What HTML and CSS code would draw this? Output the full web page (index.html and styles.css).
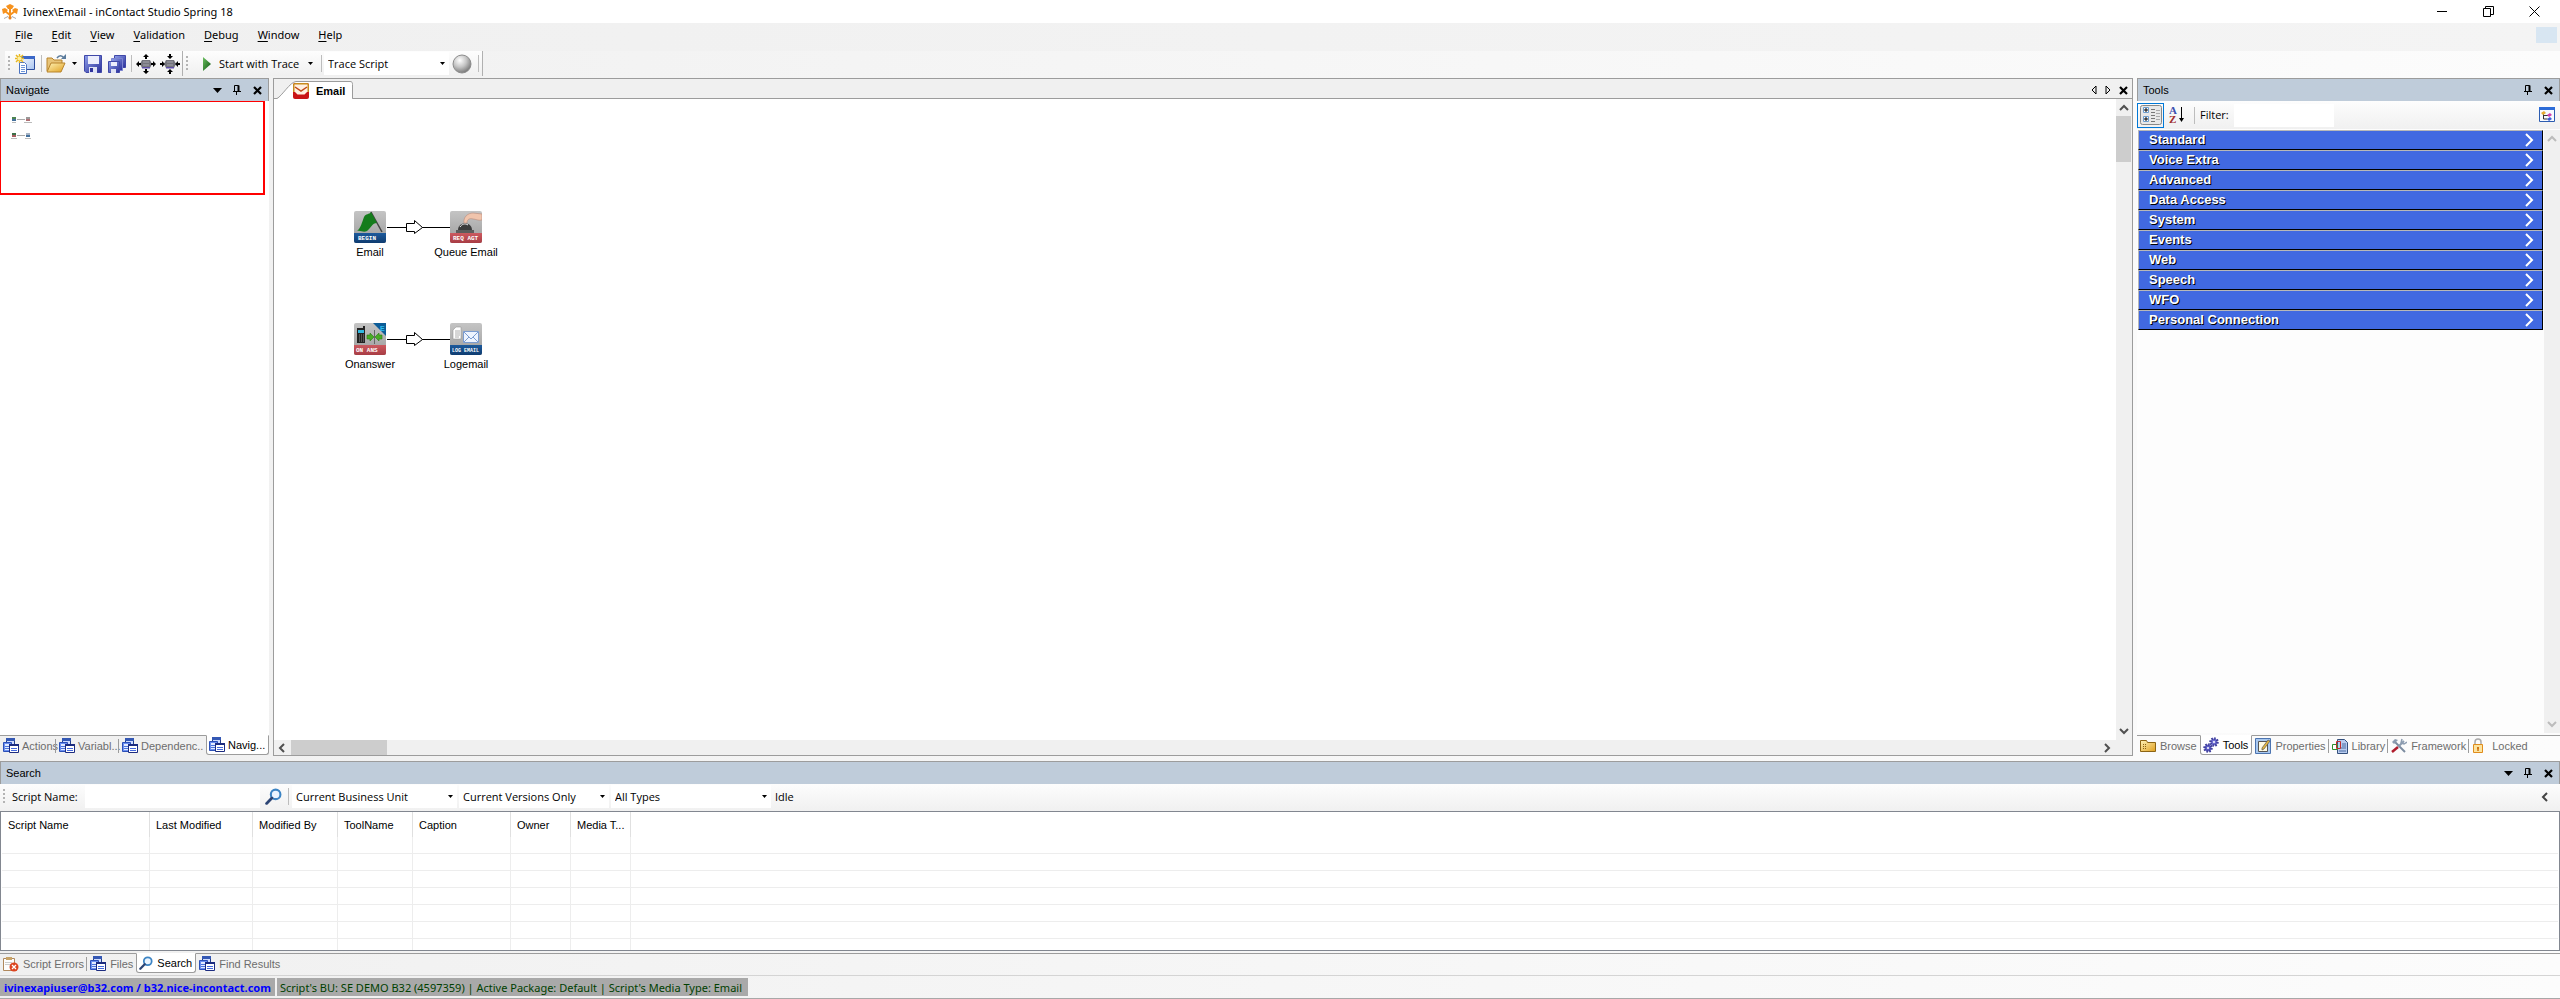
FILE: index.html
```html
<!DOCTYPE html>
<html lang="en">
<head>
  <meta charset="UTF-8">
  <meta name="viewport" content="width=device-width, initial-scale=1.0">
  <title>Ivinex\Email - inContact Studio Spring 18</title>
  <link rel="stylesheet" href="styles.css">
</head>
<body>
  <!-- shared icons -->
  <svg class="defs" width="0" height="0">
    <defs>
      <linearGradient id="gFolder" x1="0" y1="0" x2="1" y2="1"><stop offset="0" stop-color="#fff3b8"/><stop offset="1" stop-color="#e0a020"/></linearGradient>
      <linearGradient id="gBlue" x1="0" y1="0" x2="1" y2="1"><stop offset="0" stop-color="#8fa0ea"/><stop offset="1" stop-color="#2a2f9a"/></linearGradient>
      <linearGradient id="gPane" x1="0" y1="0" x2="1" y2="1"><stop offset="0" stop-color="#ffffff"/><stop offset="1" stop-color="#a8c4f0"/></linearGradient>
      <linearGradient id="gTile" x1="0" y1="0" x2="0" y2="1"><stop offset="0" stop-color="#c4c4c4"/><stop offset="1" stop-color="#9c9c9c"/></linearGradient>
      <linearGradient id="gNavy" x1="0" y1="0" x2="0" y2="1"><stop offset="0" stop-color="#1d5a9c"/><stop offset="1" stop-color="#0f3c70"/></linearGradient>
      <linearGradient id="gRed" x1="0" y1="0" x2="0" y2="1"><stop offset="0" stop-color="#cc5a60"/><stop offset="1" stop-color="#a83c44"/></linearGradient>
      <linearGradient id="gPlay" x1="0" y1="0" x2="1" y2="1"><stop offset="0" stop-color="#6cc060"/><stop offset="1" stop-color="#0c5410"/></linearGradient>
      <radialGradient id="gBall" cx="0.38" cy="0.3" r="0.75"><stop offset="0" stop-color="#ffffff"/><stop offset="0.5" stop-color="#c4c4c4"/><stop offset="1" stop-color="#707070"/></radialGradient>
    </defs>
    <symbol id="i-down" viewBox="0 0 5 3"><path d="M0 0h5L2.500 3z" fill="#000"/></symbol>
    <symbol id="i-menu" viewBox="0 0 9 5"><path d="M0 0h9L4.500 5z" fill="#000"/></symbol>
    <symbol id="i-pin" viewBox="0 0 8 10"><path d="M1.500 6V.5h4V6M5 .5v5.500M6 .5V6M0 6.500h8M3.500 7v3" fill="none" stroke="#000"/></symbol>
    <symbol id="i-x" viewBox="0 0 9 9"><path d="M1 1l7 7M8 1L1 8" stroke="#000" stroke-width="2.200"/></symbol>
    <symbol id="i-chev" viewBox="0 0 9 14"><path d="M1 1l6 6-6 6" fill="none" stroke="#fff" stroke-width="2"/></symbol>
    <symbol id="i-script" viewBox="0 0 16 16">
      <path d="M3.500 .5h8v8h-8z" fill="#cfdcff" stroke="#24408c"/><path d="M3 0h9v3H3z" fill="#3458b4"/>
      <path d="M.5 4.500h8v9h-8z" fill="#6c90f0" stroke="#2c50b8"/><path d="M2 6h5v6H2z" fill="#e4ecff"/><path d="M2 8.500h5M2 10.500h5" stroke="#4c74dc"/>
      <path d="M6.500 6.500h9v8h-9z" fill="#fff" stroke="#1c2c80"/><path d="M6 6h10v2H6z" fill="#1c2c80"/><path d="M8 10.500h6M8 12.500h6" stroke="#4468dc"/>
    </symbol>
    <symbol id="i-find" viewBox="0 0 16 16">
      <circle cx="10" cy="6" r="4.500" fill="#eaf4ff" stroke="#3c84c4" stroke-width="2"/><path d="M6.500 9.500L1.500 14.500" stroke="#2c4474" stroke-width="2.600" stroke-linecap="round"/>
    </symbol>
    <symbol id="i-arrow" viewBox="0 0 63 14">
      <path d="M0 7h20v1H0zM35 7h28v1H35z" fill="#000" shape-rendering="crispEdges"/><path d="M19.500 3.500h8v-3l8 7-8 6v-2h-8z" fill="#fff" stroke="#000"/>
    </symbol>
  </svg>

  <header class="titlebar">
    <svg class="app-icon" width="16" height="16" viewBox="0 0 16 16">
      <path d="M2 14.500l4-2 2 2 2-2 4 2" fill="none" stroke="#aaa"/>
      <path d="M8 15V4M8 11L3 7M8 11l5-4" stroke="#f6921e" stroke-width="2" fill="none"/>
      <path d="M8 0l4 2-2 3H6L4 2z" fill="#f6921e"/><path d="M0 5l3-1 3 2-3 3-2 1zM16 5l-3-1-3 2 3 3 2 1z" fill="#f6921e"/><circle cx="8" cy="14" r="1.500" fill="#e8801c"/>
    </svg>
    <h1 class="title">Ivinex\Email - inContact Studio Spring 18</h1>
    <div class="window-buttons">
      <button aria-label="Minimize"><svg width="11" height="11"><path d="M0 5.500h10" stroke="#000"/></svg></button>
      <button aria-label="Restore"><svg width="11" height="11"><path d="M.5 2.500h7v8h-7zM2.500 2V.5h8v8H8" fill="none" stroke="#000"/></svg></button>
      <button aria-label="Close"><svg width="11" height="11"><path d="M.5 .5l10 10M10.500 .5l-10 10" stroke="#000"/></svg></button>
    </div>
  </header>

  <nav class="menubar">
    <button><u>F</u>ile</button>
    <button><u>E</u>dit</button>
    <button><u>V</u>iew</button>
    <button><u>V</u>alidation</button>
    <button><u>D</u>ebug</button>
    <button><u>W</u>indow</button>
    <button><u>H</u>elp</button>
    <span class="mdi-box"></span>
  </nav>

  <div class="toolbars">
    <div class="strip">
      <span class="grip"></span>
      <button class="tool" aria-label="New script"><svg width="20" height="20" viewBox="0 0 20 20">
        <path d="M4.500 2.500h15v13h-15z" fill="url(#gPane)" stroke="#2c4c9c"/><path d="M4 2h16v3H4z" fill="#3c68c8"/>
        <path d="M4.500 8.500h5l2 2v9h-7z" fill="#fff" stroke="#4c74c0"/><path d="M6 11.500h4M6 13.500h4M6 15.500h4M6 17.500h4" stroke="#6c94d8"/>
        <path d="M4.500 0v9M0 4.500h9M1 1l7 7M8 1L1 8" stroke="#e8b820" stroke-width="1.500"/><circle cx="4.500" cy="4.500" r="2" fill="#fff09c"/></svg></button>
      <span class="sep"></span>
      <button class="tool" aria-label="Open"><svg width="20" height="20" viewBox="0 0 20 20">
        <path d="M1 17V4h5l2 2h8v4" fill="#e8c478" stroke="#b8842c"/><path d="M1 18l4-9h14l-4 9z" fill="url(#gFolder)" stroke="#b8842c"/>
        <path d="M11 4c2-3 5-3 7 0" fill="none" stroke="#5c7c9c" stroke-width="1.500"/><path d="M15 5h5V0z" fill="#5c7c9c"/></svg></button>
      <button class="drop" aria-label="Open recent"><svg width="5" height="3"><use href="#i-down"/></svg></button>
      <button class="tool" aria-label="Save"><svg width="18" height="18" viewBox="0 0 18 18">
        <path d="M.5 .5h17v17H2l-1.500-1.500z" fill="url(#gBlue)" stroke="#4048a8"/><path d="M4 1h11v8H4z" fill="#eceefc"/><path d="M5 12h8v6H5z" fill="#dfe2f4"/><path d="M6 13h3v4H6z" fill="#30349c"/></svg></button>
      <button class="tool" aria-label="Save all"><svg width="18" height="18" viewBox="0 0 18 18">
        <path d="M6.500 .5h11v12h-11z" fill="url(#gBlue)" stroke="#4048a8"/><path d="M3.500 3.500h11v12h-11z" fill="url(#gBlue)" stroke="#7c84d0"/>
        <path d="M.5 6.500h11v11h-11z" fill="url(#gBlue)" stroke="#4048a8"/><path d="M3 7h6v4H3z" fill="#eceefc"/><path d="M3 14h5v4H3z" fill="#dfe2f4"/></svg></button>
      <span class="sep"></span>
      <button class="tool" aria-label="Expand"><svg width="20" height="20" viewBox="0 0 20 20">
        <path d="M6 6h8l2 4-2 4H6l-2-4z" fill="#74747c"/><path d="M6 13h8v1.500H6z" fill="#6050a8"/><path d="M10 0l3 3h-2v2H9V3H7zM10 20l3-3h-2v-2H9v2H7zM0 10l3-3v2h2v2H3v2zM20 10l-3-3v2h-2v2h2v2z" fill="#000"/><path d="M7 8h6M7 11h6" stroke="#a4a4ac"/></svg></button>
      <button class="tool" aria-label="Contract"><svg width="20" height="20" viewBox="0 0 20 20">
        <path d="M6 6h8l2 4-2 4H6l-2-4z" fill="#74747c"/><path d="M6 13h8v1.500H6z" fill="#6050a8"/><path d="M10 5l3-3h-2V0H9v2H7zM10 15l3 3h-2v2H9v-2H7zM5 10L2 7v2H0v2h2v2zM15 10l3-3v2h2v2h-2v2z" fill="#000"/><path d="M7 8h6M7 11h6" stroke="#a4a4ac"/></svg></button>
    </div>
    <div class="strip">
      <span class="grip"></span>
      <button class="start"><svg width="8" height="14" viewBox="0 0 8 14"><path d="M0 0l8 7-8 7z" fill="url(#gPlay)"/></svg>Start with Trace</button>
      <button class="drop" aria-label="Start options"><svg width="5" height="3"><use href="#i-down"/></svg></button>
      <span class="sep"></span>
      <div class="combo combo-trace">
        <select aria-label="Trace mode"><option>Trace Script</option></select>
        <svg width="5" height="3"><use href="#i-down"/></svg>
      </div>
      <button class="tool" aria-label="Trace state"><svg width="20" height="20"><circle cx="10" cy="10" r="9" fill="url(#gBall)" stroke="#8c8c8c"/></svg></button>
      <span class="sep"></span>
    </div>
  </div>

  <main class="dock">
    <section class="panel">
      <div class="panel-head">
        <h2>Navigate</h2>
        <button aria-label="Menu"><svg width="9" height="5"><use href="#i-menu"/></svg></button>
        <button aria-label="Pin"><svg width="8" height="10"><use href="#i-pin"/></svg></button>
        <button aria-label="Close"><svg width="9" height="9"><use href="#i-x"/></svg></button>
      </div>
      <div class="panel-body">
        <div class="overview">
          <svg width="24" height="26" viewBox="0 0 24 26">
            <path d="M6 3.500h8M6 19.500h8" stroke="#aaa"/>
            <path d="M1 1h4v2H1z" fill="#4c8450"/><path d="M1 3h4v2H1z" fill="#44709c"/><path d="M15 1h4v2h-4z" fill="#999"/><path d="M15 3h4v2h-4z" fill="#b07074"/>
            <path d="M1 17h4v2H1z" fill="#3c7048"/><path d="M1 19h4v2H1z" fill="#a85c60"/><path d="M15 17h4v2h-4z" fill="#a8b4c4"/><path d="M15 19h4v2h-4z" fill="#44709c"/>
            <path d="M1 6.500h4M13 6.500h8M0 22.500h6M14 22.500h6" stroke="#bbb"/>
          </svg>
        </div>
      </div>
      <div class="tabs nav-tabs">
        <button class="tab"><svg width="16" height="16"><use href="#i-script"/></svg><span>Actions</span></button>
        <button class="tab"><svg width="16" height="16"><use href="#i-script"/></svg><span>Variabl...</span></button>
        <button class="tab"><svg width="16" height="16"><use href="#i-script"/></svg><span>Dependenc..</span></button>
        <button class="tab active"><svg width="16" height="16"><use href="#i-script"/></svg><span>Navig...</span></button>
      </div>
    </section>

    <section class="editor">
      <div class="doc-tabs">
        <button class="doc-tab">
          <svg class="doc-shape" width="80" height="20"><path d="M0 19.500h3C8 17 16 3 22 2.500h54c2 0 2.500 1 2.500 3v14.500H0z" fill="#fff"/><path d="M0 19.500h3C8 17 16 3 22 2.500h54c2 0 2.500 1 2.500 3v14h1.500" fill="none" stroke="#9c9c9c"/></svg>
          <svg width="16" height="16" viewBox="0 0 16 16"><rect width="16" height="16" rx="2" fill="#c81414"/><path d="M0 2q0-2 2-2h12q2 0 2 2v7H0z" fill="#c88c1c"/><path d="M1.500 1.500h13v7l-3 3h-7l-3-3z" fill="#fff0e0"/><path d="M2 4l6 4 6-4" fill="none" stroke="#c04818" stroke-width="1.500"/></svg>
          <span>Email</span>
        </button>
        <div class="doc-actions">
          <button aria-label="Previous"><svg width="6" height="10"><path d="M5 1v8L1 5z" fill="none" stroke="#000"/></svg></button>
          <button aria-label="Next"><svg width="6" height="10"><path d="M1 1v8l4-4z" fill="none" stroke="#000"/></svg></button>
          <button aria-label="Close"><svg width="9" height="9"><use href="#i-x"/></svg></button>
        </div>
      </div>
      <div class="canvas-wrap">
        <div class="canvas">
          <figure class="node begin">
            <svg width="32" height="32" viewBox="0 0 32 32"><rect width="32" height="32" rx="2" fill="url(#gTile)"/>
              <path d="M17 1l11 20" stroke="#444" stroke-width="1.500"/><path d="M17 1c-2 3-5 1-7 5-2 5-3 11-7 14 4-1 6 2 10 0 4-3 5-8 10-8z" fill="#157c1c"/><path d="M0 22h32v8q0 2-2 2H2q-2 0-2-2z" fill="url(#gNavy)"/><text class="tile-text" x="4" y="29">BEGIN</text></svg>
            <figcaption>Email</figcaption>
          </figure>
          <svg class="link link-a" width="63" height="14"><use href="#i-arrow"/></svg>
          <figure class="node queue">
            <svg width="32" height="32" viewBox="0 0 32 32"><rect width="32" height="32" rx="2" fill="url(#gTile)"/>
              <path d="M8 19c0-9 14-9 14 0z" fill="#3c3c3c"/><path d="M10 16c2-3 5-4 8-2" stroke="#eee" fill="none"/><path d="M6 19h18v3H6z" fill="#5c5c5c"/><path d="M14 12c-1-6 4-10 9-10l9 1v6c-4 1-6-1-9-1-3-1-6 0-6 4z" fill="#f0c4ac" stroke="#b88c7c" stroke-width=".6"/><path d="M0 22h32v8q0 2-2 2H2q-2 0-2-2z" fill="url(#gRed)"/><text class="tile-text" x="3" y="29">REQ AGT</text></svg>
            <figcaption>Queue Email</figcaption>
          </figure>
          <figure class="node answer">
            <svg width="32" height="32" viewBox="0 0 32 32"><rect width="32" height="32" rx="2" fill="url(#gTile)"/>
              <path d="M19 0h13v13z" fill="#0c5c98"/><text class="tile-mark" x="26" y="8">E</text>
              <path d="M9 3h2v3H9zM3 5h8v15H3z" fill="#222"/><path d="M4 7h6v3H4z" fill="#30b8e0"/><path d="M5 12h5M5 14h5M5 16h5M5 18h5" stroke="#888" stroke-dasharray="1 1"/>
              <path d="M20.500 7v14" stroke="#666"/><path d="M13 12h3v-2l4 4-4 4v-2h-3zM28 12h-3v-2l-4 4 4 4v-2h3z" fill="#48ac24" stroke="#2c7c14" stroke-width=".6"/>
              <path d="M0 22h32v8q0 2-2 2H2q-2 0-2-2z" fill="url(#gRed)"/><text class="tile-text" x="2" y="29">ON ANS</text></svg>
            <figcaption>Onanswer</figcaption>
          </figure>
          <svg class="link link-b" width="63" height="14"><use href="#i-arrow"/></svg>
          <figure class="node log">
            <svg width="32" height="32" viewBox="0 0 32 32"><rect width="32" height="32" rx="2" fill="url(#gTile)"/>
              <path d="M6 4h5v12H3V7z" fill="#fff" stroke="#999" stroke-width=".6"/><path d="M5 8h5M5 10h5M5 12h5M5 14h4" stroke="#999" stroke-width=".8"/>
              <path d="M13.500 8.500h15v11h-15z" fill="#eef4ff" stroke="#7c9cd0"/><path d="M14 9l7 7 7-7M14 19l5-5M28 19l-5-5" fill="none" stroke="#7c9cd0"/>
              <path d="M0 22h32v8q0 2-2 2H2q-2 0-2-2z" fill="url(#gNavy)"/><text class="tile-text small" x="2" y="29">LOG EMAIL</text></svg>
            <figcaption>Logemail</figcaption>
          </figure>
        </div>
        <div class="vscroll">
          <svg width="15" height="17"><path d="M4 11l4-4 4 4" fill="none" stroke="#505050" stroke-width="2"/></svg>
          <span class="thumb"></span>
          <svg class="scroll-end" width="15" height="17"><path d="M4 6l4 4 4-4" fill="none" stroke="#505050" stroke-width="2"/></svg>
        </div>
        <div class="hscroll">
          <svg width="17" height="15"><path d="M10 4L6 8l4 4" fill="none" stroke="#505050" stroke-width="2"/></svg>
          <span class="thumb"></span>
          <svg class="scroll-end" width="17" height="15"><path d="M7 4l4 4-4 4" fill="none" stroke="#505050" stroke-width="2"/></svg>
        </div>
      </div>
    </section>

    <section class="panel">
      <div class="panel-head">
        <h2>Tools</h2>
        <button aria-label="Pin"><svg width="8" height="10"><use href="#i-pin"/></svg></button>
        <button aria-label="Close"><svg width="9" height="9"><use href="#i-x"/></svg></button>
      </div>
      <div class="filter-bar">
        <button class="grouped" aria-label="Group by category"><svg width="22" height="20" viewBox="0 0 22 20">
          <rect x=".5" y=".5" width="21" height="19" rx="2" fill="#e8e8e8" stroke="#888"/>
          <path d="M3.500 2.500h5v5h-5zM3.500 11.500h5v5h-5z" fill="#fff" stroke="#6c9ccc"/><path d="M4 5h4M6 3v4M4 14h4M6 12v4" stroke="#000"/><path d="M11 4.500h4M11 7.500h4M11 10.500h4M11 13.500h4M11 16.500h4" stroke="#777"/><path d="M16 5.500h4M16 8.500h4M16 11.500h4M16 14.500h4" stroke="#aaa"/></svg></button>
        <button class="sort" aria-label="Sort"><svg width="16" height="18" viewBox="0 0 16 18">
          <text class="az-a" x="0" y="8">A</text><text class="az-z" x="0" y="17">Z</text><path d="M12.500 1v13" stroke="#000"/><path d="M10 12h5l-2.500 4z" fill="#000"/></svg></button>
        <span class="sep"></span>
        <label for="filter">Filter:</label>
        <input id="filter" type="text">
        <button class="tree" aria-label="Tree view"><svg width="16" height="16" viewBox="0 0 16 16">
          <path d="M.5 .5h15v14H.5z" fill="#f8fbff" stroke="#2c5cb0"/><path d="M0 0h16v3H0z" fill="#2c6cd8"/><path d="M4.500 7v5h4M5 8.500h4" fill="none" stroke="#333"/><path d="M2 6l3-2 2 2-3 2z" fill="#e8ac30"/><path d="M8 8l3-2 2 2-3 2z" fill="#d040b0"/><path d="M8 12l3-2 2 2-3 2z" fill="#3c60d8"/></svg></button>
      </div>
      <div class="tool-area">
        <div class="groups">
          <button class="group">Standard<svg width="9" height="14"><use href="#i-chev"/></svg></button>
          <button class="group">Voice Extra<svg width="9" height="14"><use href="#i-chev"/></svg></button>
          <button class="group">Advanced<svg width="9" height="14"><use href="#i-chev"/></svg></button>
          <button class="group">Data Access<svg width="9" height="14"><use href="#i-chev"/></svg></button>
          <button class="group">System<svg width="9" height="14"><use href="#i-chev"/></svg></button>
          <button class="group">Events<svg width="9" height="14"><use href="#i-chev"/></svg></button>
          <button class="group">Web<svg width="9" height="14"><use href="#i-chev"/></svg></button>
          <button class="group">Speech<svg width="9" height="14"><use href="#i-chev"/></svg></button>
          <button class="group">WFO<svg width="9" height="14"><use href="#i-chev"/></svg></button>
          <button class="group">Personal Connection<svg width="9" height="14"><use href="#i-chev"/></svg></button>
        </div>
        <div class="vscroll disabled">
          <svg width="15" height="17"><path d="M4 11l4-4 4 4" fill="none" stroke="#bcbcbc" stroke-width="2"/></svg>
          <svg class="scroll-end" width="15" height="17"><path d="M4 6l4 4 4-4" fill="none" stroke="#bcbcbc" stroke-width="2"/></svg>
        </div>
      </div>
      <div class="tabs tool-tabs">
        <button class="tab"><svg width="16" height="16" viewBox="0 0 16 16"><path d="M.5 13.500v-11h6l1 2h8v9z" fill="url(#gFolder)" stroke="#8c6414"/><path d="M3 6.500h3M3 8.500h3M3 10.500h3" stroke="#8c6414" stroke-dasharray="1 1"/></svg><span>Browse</span></button>
        <button class="tab active"><svg width="16" height="16" viewBox="0 0 16 16"><circle cx="5" cy="11" r="3.500" fill="#5c5cc4" stroke="#40409c" stroke-width="2.500" stroke-dasharray="1.500 1.200"/><circle cx="11" cy="5" r="3.500" fill="#6c6cd0" stroke="#40409c" stroke-width="2.500" stroke-dasharray="1.500 1.200"/><circle cx="5" cy="11" r="1" fill="#fff"/><circle cx="11" cy="5" r="1" fill="#fff"/></svg><span>Tools</span></button>
        <button class="tab"><svg width="16" height="16" viewBox="0 0 16 16"><path d="M.5 .5h15v15H.5z" fill="#a8c8f0" stroke="#4c74b0"/><path d="M3.500 3.500h9v10h-9z" fill="#fffbe4" stroke="#555"/><path d="M7 10l6-8 2 1-6 8-2 1z" fill="#e8b83c" stroke="#555" stroke-width=".7"/></svg><span>Properties</span></button>
        <button class="tab"><svg width="16" height="16" viewBox="0 0 16 16"><path d="M5.500 1.500h7l3 3v11h-10z" fill="#b8ccf0" stroke="#34507c"/><path d="M10 6h4M10 8h4M8 10h6M7 13h7" stroke="#4c6ca0"/><path d="M.5 6.500h5v5h-5z" fill="#fff" stroke="#2c8c2c"/><path d="M4.500 3.500h4v7h-4z" fill="none" stroke="#c02c2c"/></svg><span>Library</span></button>
        <button class="tab"><svg width="16" height="16" viewBox="0 0 16 16"><path d="M3 3l11 11" stroke="#7c8ca0" stroke-width="2"/><path d="M1 4l3-3 3 1-4 4z" fill="#8c9cb0"/><path d="M13 3L8 8" stroke="#8c9cb0" stroke-width="2"/><path d="M11 1l-1 4 3 1 3-2" fill="none" stroke="#8c9cb0" stroke-width="1.500"/><path d="M7 9l-6 5" stroke="#b01c2c" stroke-width="2.500"/></svg><span>Framework</span></button>
        <button class="tab"><svg width="16" height="16" viewBox="0 0 16 16"><path d="M3 7V4c0-4 6-4 6 0v3" fill="none" stroke="#aaa" stroke-width="1.500"/><path d="M1.500 6.500h9v8h-9z" fill="#fce4a0" stroke="#e08c1c"/><path d="M6 9v4M5 10h2" stroke="#d0700c" stroke-width="1.500"/></svg><span>Locked</span></button>
      </div>
    </section>
  </main>

  <section class="panel search">
    <div class="panel-head">
      <h2>Search</h2>
      <button aria-label="Menu"><svg width="9" height="5"><use href="#i-menu"/></svg></button>
      <button aria-label="Pin"><svg width="8" height="10"><use href="#i-pin"/></svg></button>
      <button aria-label="Close"><svg width="9" height="9"><use href="#i-x"/></svg></button>
    </div>
    <div class="search-bar">
      <span class="grip"></span>
      <label for="scriptName">Script Name:</label>
      <input id="scriptName" type="text">
      <button class="go" aria-label="Search"><svg width="17" height="17"><use href="#i-find"/></svg></button>
      <span class="sep"></span>
      <div class="combo combo-unit">
        <select aria-label="Business unit"><option>Current Business Unit</option></select>
        <svg width="5" height="3"><use href="#i-down"/></svg>
      </div>
      <div class="combo combo-version">
        <select aria-label="Versions"><option>Current Versions Only</option></select>
        <svg width="5" height="3"><use href="#i-down"/></svg>
      </div>
      <div class="combo combo-type">
        <select aria-label="Types"><option>All Types</option></select>
        <svg width="5" height="3"><use href="#i-down"/></svg>
      </div>
      <span class="state">Idle</span>
      <button class="collapse" aria-label="Collapse"><svg width="7" height="10"><path d="M6 1L2 5l4 4" fill="none" stroke="#444" stroke-width="2"/></svg></button>
    </div>
    <div class="results">
      <table>
        <colgroup><col class="c-script"><col class="c-date"><col class="c-by"><col class="c-tool"><col class="c-caption"><col class="c-owner"><col class="c-owner"><col></colgroup>
        <thead>
          <tr><th>Script Name</th><th>Last Modified</th><th>Modified By</th><th>ToolName</th><th>Caption</th><th>Owner</th><th>Media T...</th><th></th></tr>
        </thead>
        <tbody>
          <tr><td></td><td></td><td></td><td></td><td></td><td></td><td></td><td></td></tr>
          <tr><td></td><td></td><td></td><td></td><td></td><td></td><td></td><td></td></tr>
          <tr><td></td><td></td><td></td><td></td><td></td><td></td><td></td><td></td></tr>
          <tr><td></td><td></td><td></td><td></td><td></td><td></td><td></td><td></td></tr>
          <tr><td></td><td></td><td></td><td></td><td></td><td></td><td></td><td></td></tr>
          <tr><td></td><td></td><td></td><td></td><td></td><td></td><td></td><td></td></tr>
          <tr><td></td><td></td><td></td><td></td><td></td><td></td><td></td><td></td></tr>
        </tbody>
      </table>
    </div>
    <div class="tabs search-tabs">
      <button class="tab"><svg width="16" height="16" viewBox="0 0 16 16"><path d="M.5 2.500h11v12H.5z" fill="#fdfdfd" stroke="#b0885c"/><path d="M3 1h6v3H3z" fill="#c8a468"/><path d="M2 6.500h7M2 8.500h7" stroke="#ccc"/><circle cx="11" cy="11" r="4.500" fill="#dc4420"/><path d="M9 9l4 4M13 9l-4 4" stroke="#fff" stroke-width="1.300"/></svg><span>Script Errors</span></button>
      <button class="tab"><svg width="16" height="16"><use href="#i-script"/></svg><span>Files</span></button>
      <button class="tab active"><svg width="14" height="14"><use href="#i-find"/></svg><span>Search</span></button>
      <button class="tab"><svg width="16" height="16"><use href="#i-script"/></svg><span>Find Results</span></button>
    </div>
  </section>

  <footer class="statusbar">
    <span class="user">ivinexapiuser@b32.com / b32.nice-incontact.com</span>
    <span class="info">Script's BU: SE DEMO B32 (4597359) | Active Package: Default | Script's Media Type: Email</span>
  </footer>
</body>
</html>
```

FILE: styles.css
```css
* {
  box-sizing: border-box;
}

body {
  margin: 0;
  height: 100vh;
  display: flex;
  flex-direction: column;
  overflow: hidden;
  background: linear-gradient(to right, #f0f0f0, #fcfcfc);
  color: #000;
  font: 11px/16px "Open Sans", "Noto Sans", sans-serif;
}

button, input, select {
  font: inherit;
  color: inherit;
  background: none;
  border: none;
  border-radius: 0;
  padding: 0;
  margin: 0;
  outline: none;
}

button {
  display: flex;
  align-items: center;
  justify-content: center;
  white-space: nowrap;
}

svg {
  display: block;
  flex: none;
}

h1, h2 {
  margin: 0;
  font-size: 11px;
  font-weight: normal;
}

.defs {
  position: absolute;
}

/* title and menu */
.titlebar, .menubar, .statusbar {
  font-family: "Noto Sans", "Open Sans", sans-serif;
}

.titlebar {
  display: flex;
  align-items: center;
  height: 23px;
  padding: 0 3px 0 2px;
  background: #fff;
}

.title {
  flex: 1;
  padding-left: 5px;
}

.window-buttons {
  display: flex;
}

.window-buttons button {
  width: 46px;
  height: 21px;
}

.menubar {
  display: flex;
  align-items: flex-start;
  gap: 19px;
  height: 28px;
  padding: 4px 3px 0 15px;
  background: linear-gradient(to right, #f0f0f0, #f4f4f4);
}

.menubar u {
  text-underline-offset: 2px;
}

.mdi-box {
  width: 21px;
  height: 16px;
  margin-left: auto;
  background: #d8e6f2;
}

/* toolbars */
.toolbars {
  display: flex;
  height: 27px;
  padding: 0 0 2px 5px;
}

.strip {
  display: flex;
  align-items: center;
  height: 25px;
  padding-left: 3px;
  background: linear-gradient(#fdfdfd, #f0f0f0);
  border-right: 1px solid #b0b0b0;
}

.grip {
  width: 2px;
  height: 15px;
  background: repeating-linear-gradient(#b4b4b4 0 2px, transparent 2px 4px);
}

.sep {
  width: 1px;
  height: 17px;
  margin: 0 2px;
  background: #bdbdbd;
}

.tool {
  width: 24px;
  height: 22px;
}

.strip .grip + .tool {
  margin: 0 2px 0 3px;
}

.drop {
  width: 13px;
  height: 22px;
}

.start {
  gap: 8px;
  width: 96px;
  margin-left: 15px;
  justify-content: flex-start;
}

.start + .drop {
  margin: 0 2px 0 5px;
}

.combo {
  display: grid;
  align-items: center;
  height: 23px;
  background: #fff;
}

.combo select {
  grid-area: 1 / 1;
  appearance: none;
  width: 100%;
  height: 23px;
  padding: 0 12px 0 4px;
}

.combo svg {
  grid-area: 1 / 1;
  justify-self: end;
  margin-right: 4px;
  pointer-events: none;
}

.combo-trace {
  width: 125px;
  margin-right: 1px;
}

.strip:last-child .sep:last-child {
  margin: 0 3px 0 4px;
}

/* docked area */
.dock {
  flex: 1;
  min-height: 0;
  display: grid;
  grid-template-columns: 269px minmax(0, 1fr) 423px;
  column-gap: 4px;
}

.panel {
  display: flex;
  flex-direction: column;
  min-width: 0;
  min-height: 0;
}

.panel-head {
  display: flex;
  align-items: center;
  gap: 2px;
  height: 23px;
  padding-right: 2px;
  background: #bfccda;
  border: 1px solid #9c9c9c;
  border-bottom: none;
}

.panel-head h2 {
  flex: 1;
  padding-left: 5px;
  font-family: "Liberation Sans", Arial, sans-serif;
}

.panel-head button {
  width: 18px;
  height: 20px;
}

.panel-body {
  flex: 1;
  background: #fff;
}

.overview {
  width: 265px;
  height: 94px;
  padding: 14px 10px;
  border: 1px solid #f00;
  border-right-width: 2px;
  border-bottom-width: 2px;
}

/* bottom tabs of a panel */
.tabs {
  display: flex;
  height: 26px;
  font-family: "Liberation Sans", Arial, sans-serif;
  color: #6d6d6d;
}

.tabs::after {
  content: "";
  flex: 1;
  border-top: 1px solid #9c9c9c;
}

.nav-tabs::after {
  border-top-color: transparent;
}

.tab {
  position: relative;
  justify-content: flex-start;
  gap: 4px;
  height: 20px;
  padding: 0 3px;
  border-top: 1px solid #9c9c9c;
}

.tab:not(.active):has(+ .tab:not(.active))::after {
  content: "";
  position: absolute;
  right: 0;
  top: 3px;
  width: 1px;
  height: 14px;
  background: #9c9c9c;
}

.tab.active {
  color: #000;
  background: #fff;
  border: 1px solid #9c9c9c;
  border-top-color: #fff;
  border-radius: 0 0 3px 3px;
  padding: 0 3px 0 2px;
}

.nav-tabs .tab {
  width: 63px;
  gap: 3px;
  padding-right: 0;
}

.nav-tabs .tab:first-child {
  width: 56px;
}

.nav-tabs .tab:nth-child(3) {
  width: 87px;
}

/* editor */
.editor {
  display: flex;
  flex-direction: column;
  min-height: 0;
  margin-bottom: 5px;
  border: 1px solid #9c9c9c;
}

.doc-tabs {
  display: flex;
  justify-content: space-between;
  height: 20px;
  background: #f0f0f0;
  border-bottom: 1px solid #9c9c9c;
}

.doc-tab {
  position: relative;
  gap: 7px;
  width: 80px;
  height: 20px;
  padding: 3px 8px 0 19px;
  justify-content: flex-start;
  font: bold 11px/16px "Liberation Sans", Arial, sans-serif;
}

.doc-tab > * {
  position: relative;
}

.doc-tab .doc-shape {
  position: absolute;
  left: 0;
  top: 0;
}

.doc-actions {
  display: flex;
  align-items: center;
  gap: 8px;
  padding: 3px 4px 0 0;
}

.canvas-wrap {
  flex: 1;
  min-height: 0;
  display: grid;
  grid-template-columns: 1fr 16px;
  grid-template-rows: 1fr 15px;
}

.canvas {
  position: relative;
  overflow: hidden;
  background: #fff;
}

.node {
  position: absolute;
  display: flex;
  flex-direction: column;
  align-items: center;
  gap: 1px;
  width: 96px;
  margin: 0;
  font: 11px/16px "Liberation Sans", Arial, sans-serif;
}

.begin { left: 48px; top: 112px; }
.queue { left: 144px; top: 112px; }
.answer { left: 48px; top: 224px; }
.log { left: 144px; top: 224px; }

.link {
  position: absolute;
  left: 113px;
}

.link-a { top: 121px; }
.link-b { top: 233px; }

.tile-text {
  font: bold 6px "Liberation Mono", monospace;
  fill: #fff;
}

.tile-text.small {
  font-size: 5px;
}

.tile-mark {
  font: bold 7px "Liberation Sans", sans-serif;
  fill: #30c0f0;
}

.vscroll {
  display: flex;
  flex-direction: column;
  padding-right: 1px;
  background: #f0f0f0;
}

.vscroll .thumb {
  height: 46px;
  background: #cdcdcd;
}

.hscroll {
  grid-column: 1 / 3;
  display: flex;
  padding-right: 17px;
  background: #f0f0f0;
}

.hscroll .thumb {
  width: 96px;
  background: #cdcdcd;
}

.vscroll .scroll-end {
  margin-top: auto;
}

.hscroll .scroll-end {
  margin-left: auto;
}

/* tools panel */
.filter-bar {
  display: flex;
  align-items: center;
  height: 28px;
  padding-right: 5px;
  background: linear-gradient(#fdfdfd, #f0f0f0);
}

.grouped {
  width: 27px;
  height: 25px;
  border: 1px solid #0078d7;
}

.sort {
  width: 26px;
}

.az-a, .az-z {
  font: bold 11px "Liberation Serif", serif;
  fill: #3c50b0;
}

.az-z {
  fill: #a02c2c;
}

.filter-bar .sep {
  margin: 0 5px 0 4px;
}

.filter-bar input {
  width: 100px;
  height: 23px;
  margin-left: 5px;
  background: #fff;
}

.tree {
  margin-left: auto;
}

.tool-area {
  flex: 1;
  min-height: 0;
  display: flex;
  margin-bottom: 2px;
  padding: 1px 0 0 1px;
  background: #fdfdfd;
}

.groups {
  flex: 1;
  margin-right: 1px;
}

.group {
  justify-content: space-between;
  width: 100%;
  height: 20px;
  padding: 0 8px 0 10px;
  font: bold 13px/18px "Liberation Sans", Arial, sans-serif;
  color: #fff;
  text-shadow: 1px 1px 0 #000;
  background: #4169e1;
  border: 1px solid #000;
  border-top-color: #b8b8b8;
  border-left-color: #b8b8b8;
}

/* search panel */
.search-bar {
  display: flex;
  align-items: center;
  height: 27px;
  padding: 0 12px 2px 3px;
  background: linear-gradient(#fdfdfd, #f0f0f0);
}

.search-bar label {
  width: 73px;
  padding-left: 7px;
  white-space: nowrap;
}

.search-bar input {
  width: 175px;
  height: 23px;
  margin-left: 7px;
  background: #fff;
}

.go {
  width: 26px;
}

.search-bar .sep {
  margin: 0 3px 0 2px;
}

.combo-unit {
  width: 165px;
  margin-right: 2px;
}

.combo-version {
  width: 150px;
  margin-right: 2px;
}

.combo-type {
  width: 160px;
}

.state {
  padding-left: 4px;
}

.collapse {
  margin-left: auto;
}

.results {
  height: 140px;
  padding: 0 1px;
  overflow: hidden;
  background: #fff;
  border: 1px solid #828790;
}

table {
  width: 100%;
  table-layout: fixed;
  border-collapse: separate;
  border-spacing: 0;
}

th {
  height: 25px;
  padding: 0 6px;
  text-align: left;
  font: 11px/16px "Liberation Sans", Arial, sans-serif;
  border-right: 1px solid #e0e0e0;
  white-space: nowrap;
}

td {
  height: 17px;
  padding: 0;
  border-right: 1px solid #ededed;
  border-bottom: 1px solid #ededed;
}

th:last-child, td:last-child {
  border-right: none;
}

.c-script { width: 148px; }
.c-date { width: 103px; }
.c-by { width: 85px; }
.c-tool { width: 75px; }
.c-caption { width: 98px; }
.c-owner { width: 60px; }

.search-tabs {
  height: 22px;
  margin-top: 2px;
}

/* status bar */
.statusbar {
  display: flex;
  gap: 2px;
  height: 24px;
  padding: 2px 0;
  border-top: 1px solid #d4d4d4;
  border-bottom: 1px solid #a8a8a8;
  line-height: 19px;
  white-space: nowrap;
}

.user {
  padding: 0 4px;
  font-weight: bold;
  color: #00f;
  background: #a9a9a9;
}

.info {
  padding: 0 6px 0 3px;
  color: #004000;
  background: #a9a9a9;
}
```
